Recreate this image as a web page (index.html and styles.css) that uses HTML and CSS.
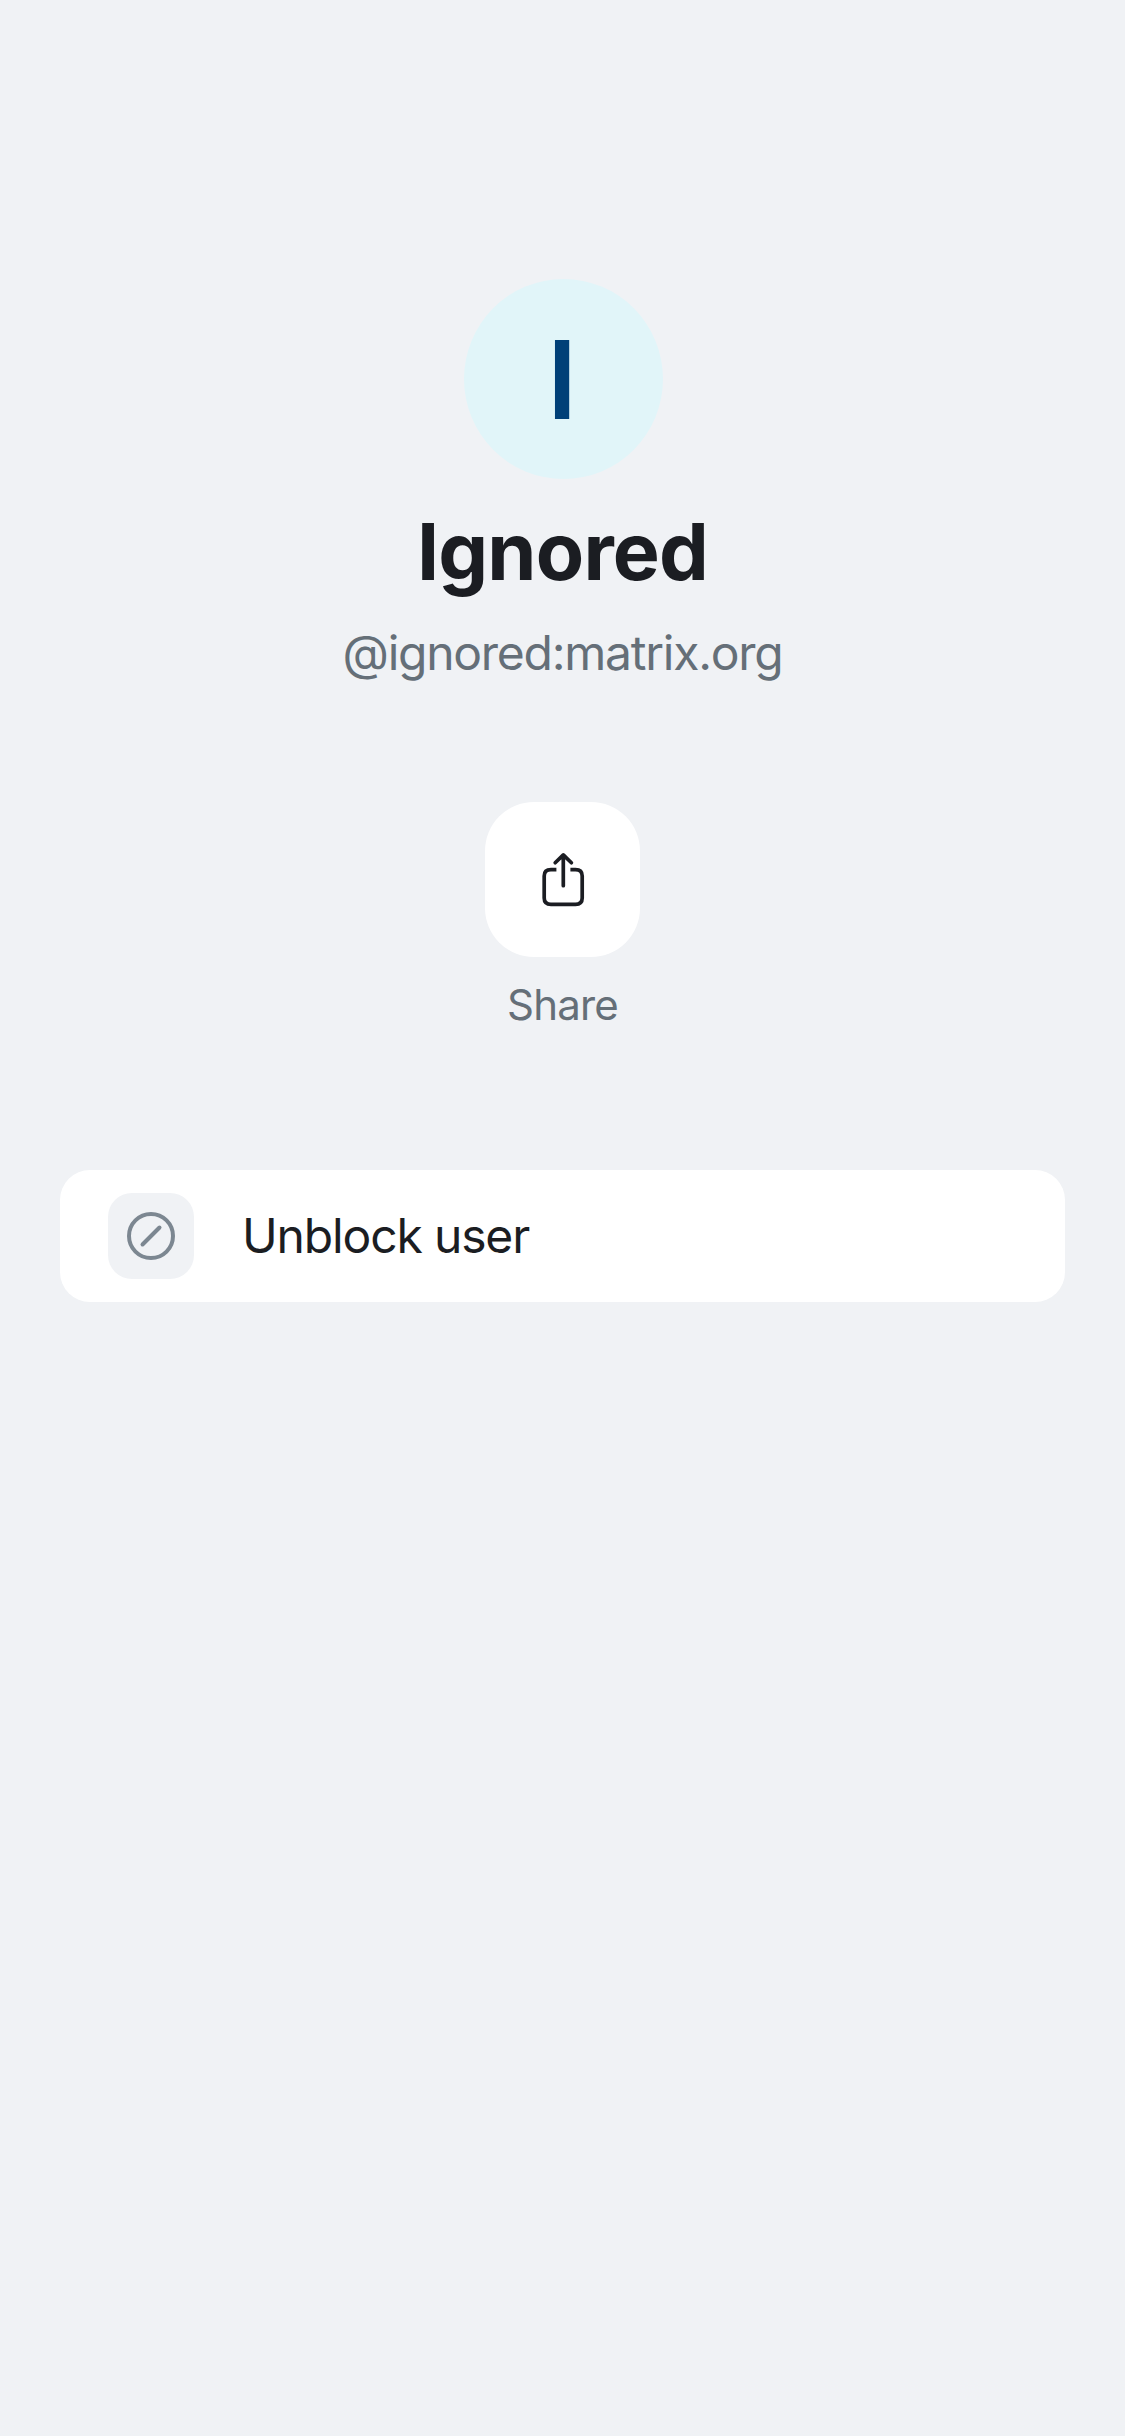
FILE: index.html
```html
<!DOCTYPE html>
<html lang="en">
<head>
<meta charset="utf-8">
<title>Ignored</title>
<link rel="stylesheet" href="styles.css">
</head>
<body>
<main class="screen">
  <header class="profile">
    <div class="avatar"><span class="initial">I</span></div>
    <h1 class="name">Ignored</h1>
    <p class="user-id">@ignored:matrix.org</p>
  </header>
  <div class="action">
    <button class="share-button" aria-label="Share">
      <svg width="48" height="60" viewBox="0 0 48 60" fill="none" stroke="currentColor" stroke-width="3.7" stroke-linejoin="round">
        <path d="M17.400 19.700H12Q5.200 19.700 5.200 26V48Q5.200 54.300 12 54.300H36.500Q43.200 54.300 43.200 48V26Q43.200 19.700 36.500 19.700H31.400"/>
        <path d="M24.300 35.700V5M16.200 12.800L24.300 4.900L32.400 12.800" stroke-linecap="round"/>
      </svg>
    </button>
    <span class="share-label">Share</span>
  </div>
  <button class="row">
    <span class="row-icon">
      <svg width="48" height="48" viewBox="0 0 48 48" fill="none" stroke="currentColor" stroke-width="4" stroke-linecap="round">
        <circle cx="24" cy="24" r="22"/>
        <path d="M15.500 32.500L32.500 15.500"/>
      </svg>
    </span>
    <span class="row-label">Unblock user</span>
  </button>
</main>
</body>
</html>
```

FILE: styles.css
```css
* { box-sizing: border-box; }
body { margin: 0; background: #f0f2f5; font-family: Inter, "Liberation Sans", sans-serif; }
button { border: 0; padding: 0; font: inherit; }
.screen { min-height: 2436px; padding: 279px 60px 0; display: flex; flex-direction: column; align-items: center; }
.profile { display: flex; flex-direction: column; align-items: center; }
.avatar { width: 199px; height: 200px; margin-left: 1px; border-radius: 50%; background: #e1f5f9; color: #004078; display: flex; align-items: center; justify-content: center; }
.initial { font-size: 109px; line-height: 200px; font-weight: 600; margin-left: -2px; }
.name { margin: 22px 0 0; font-size: 79px; line-height: 100px; font-weight: 700; letter-spacing: -0.8px; color: #1b1d22; white-space: nowrap; }
.user-id { margin: 22px 0 0; font-size: 48px; line-height: 60px; letter-spacing: -1.25px; color: #656f78; white-space: nowrap; }
.action { margin-top: 119px; display: flex; flex-direction: column; align-items: center; }
.share-button { width: 155px; height: 155px; border-radius: 49px; background: #fff; color: #1b1d22; display: flex; align-items: center; justify-content: center; }
.share-label { margin-top: 23px; font-size: 42px; line-height: 50px; letter-spacing: -0.8px; color: #656f78; }
.row { width: 100%; height: 132px; margin-top: 140px; padding-left: 48px; border-radius: 30px; background: #fff; color: #1b1d22; display: flex; align-items: center; text-align: left; }
.row-icon { width: 86px; height: 86px; border-radius: 24px; background: #f0f2f5; color: #7c8791; display: flex; align-items: center; justify-content: center; }
.row-label { margin-left: 48px; font-size: 48px; line-height: 60px; letter-spacing: -1.15px; white-space: nowrap; }
```
